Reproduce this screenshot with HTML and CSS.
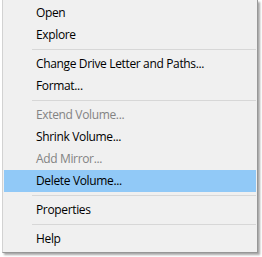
FILE: index.html
```html
<!DOCTYPE html>
<html>
<head>
<meta charset="utf-8">
<link rel="stylesheet" href="styles.css">
</head>
<body>
<div class="menu">
  <div class="item">Open</div>
  <div class="item">Explore</div>
  <div class="sep"></div>
  <div class="item">Change Drive Letter and Paths...</div>
  <div class="item">Format...</div>
  <div class="sep"></div>
  <div class="item disabled">Extend Volume...</div>
  <div class="item">Shrink Volume...</div>
  <div class="item disabled">Add Mirror...</div>
  <div class="item active">Delete Volume...</div>
  <div class="sep"></div>
  <div class="item">Properties</div>
  <div class="sep"></div>
  <div class="item">Help</div>
</div>
</body>
</html>
```

FILE: styles.css
```css
html, body {
  margin: 0;
  padding: 0;
  background: #ffffff;
}
body {
  width: 262px;
  height: 257px;
  overflow: hidden;
  font-family: "Open Sans", "Noto Sans", sans-serif;
  font-size: 12px;
  letter-spacing: -0.35px;
  color: #000000;
}
.menu {
  margin-left: 2px;
  width: 256px;
  box-sizing: border-box;
  background: #f0f0f0;
  border: 1px solid #d2d2d2;
  border-top: none;
  border-right: 1px solid #979797;
  border-bottom: 1px solid #979797;
  padding: 2px 1px 2px 1px;
  box-shadow: 2px 2px 2px rgba(0, 0, 0, 0.35);
}
.item {
  height: 22px;
  line-height: 22px;
  padding-left: 32px;
  white-space: nowrap;
}
.item.disabled {
  color: #838383;
}
.item.active {
  background: #91c9f7;
}
.sep {
  height: 1px;
  margin: 3px 0 3px 28px;
  background: #d7d7d7;
}
```
